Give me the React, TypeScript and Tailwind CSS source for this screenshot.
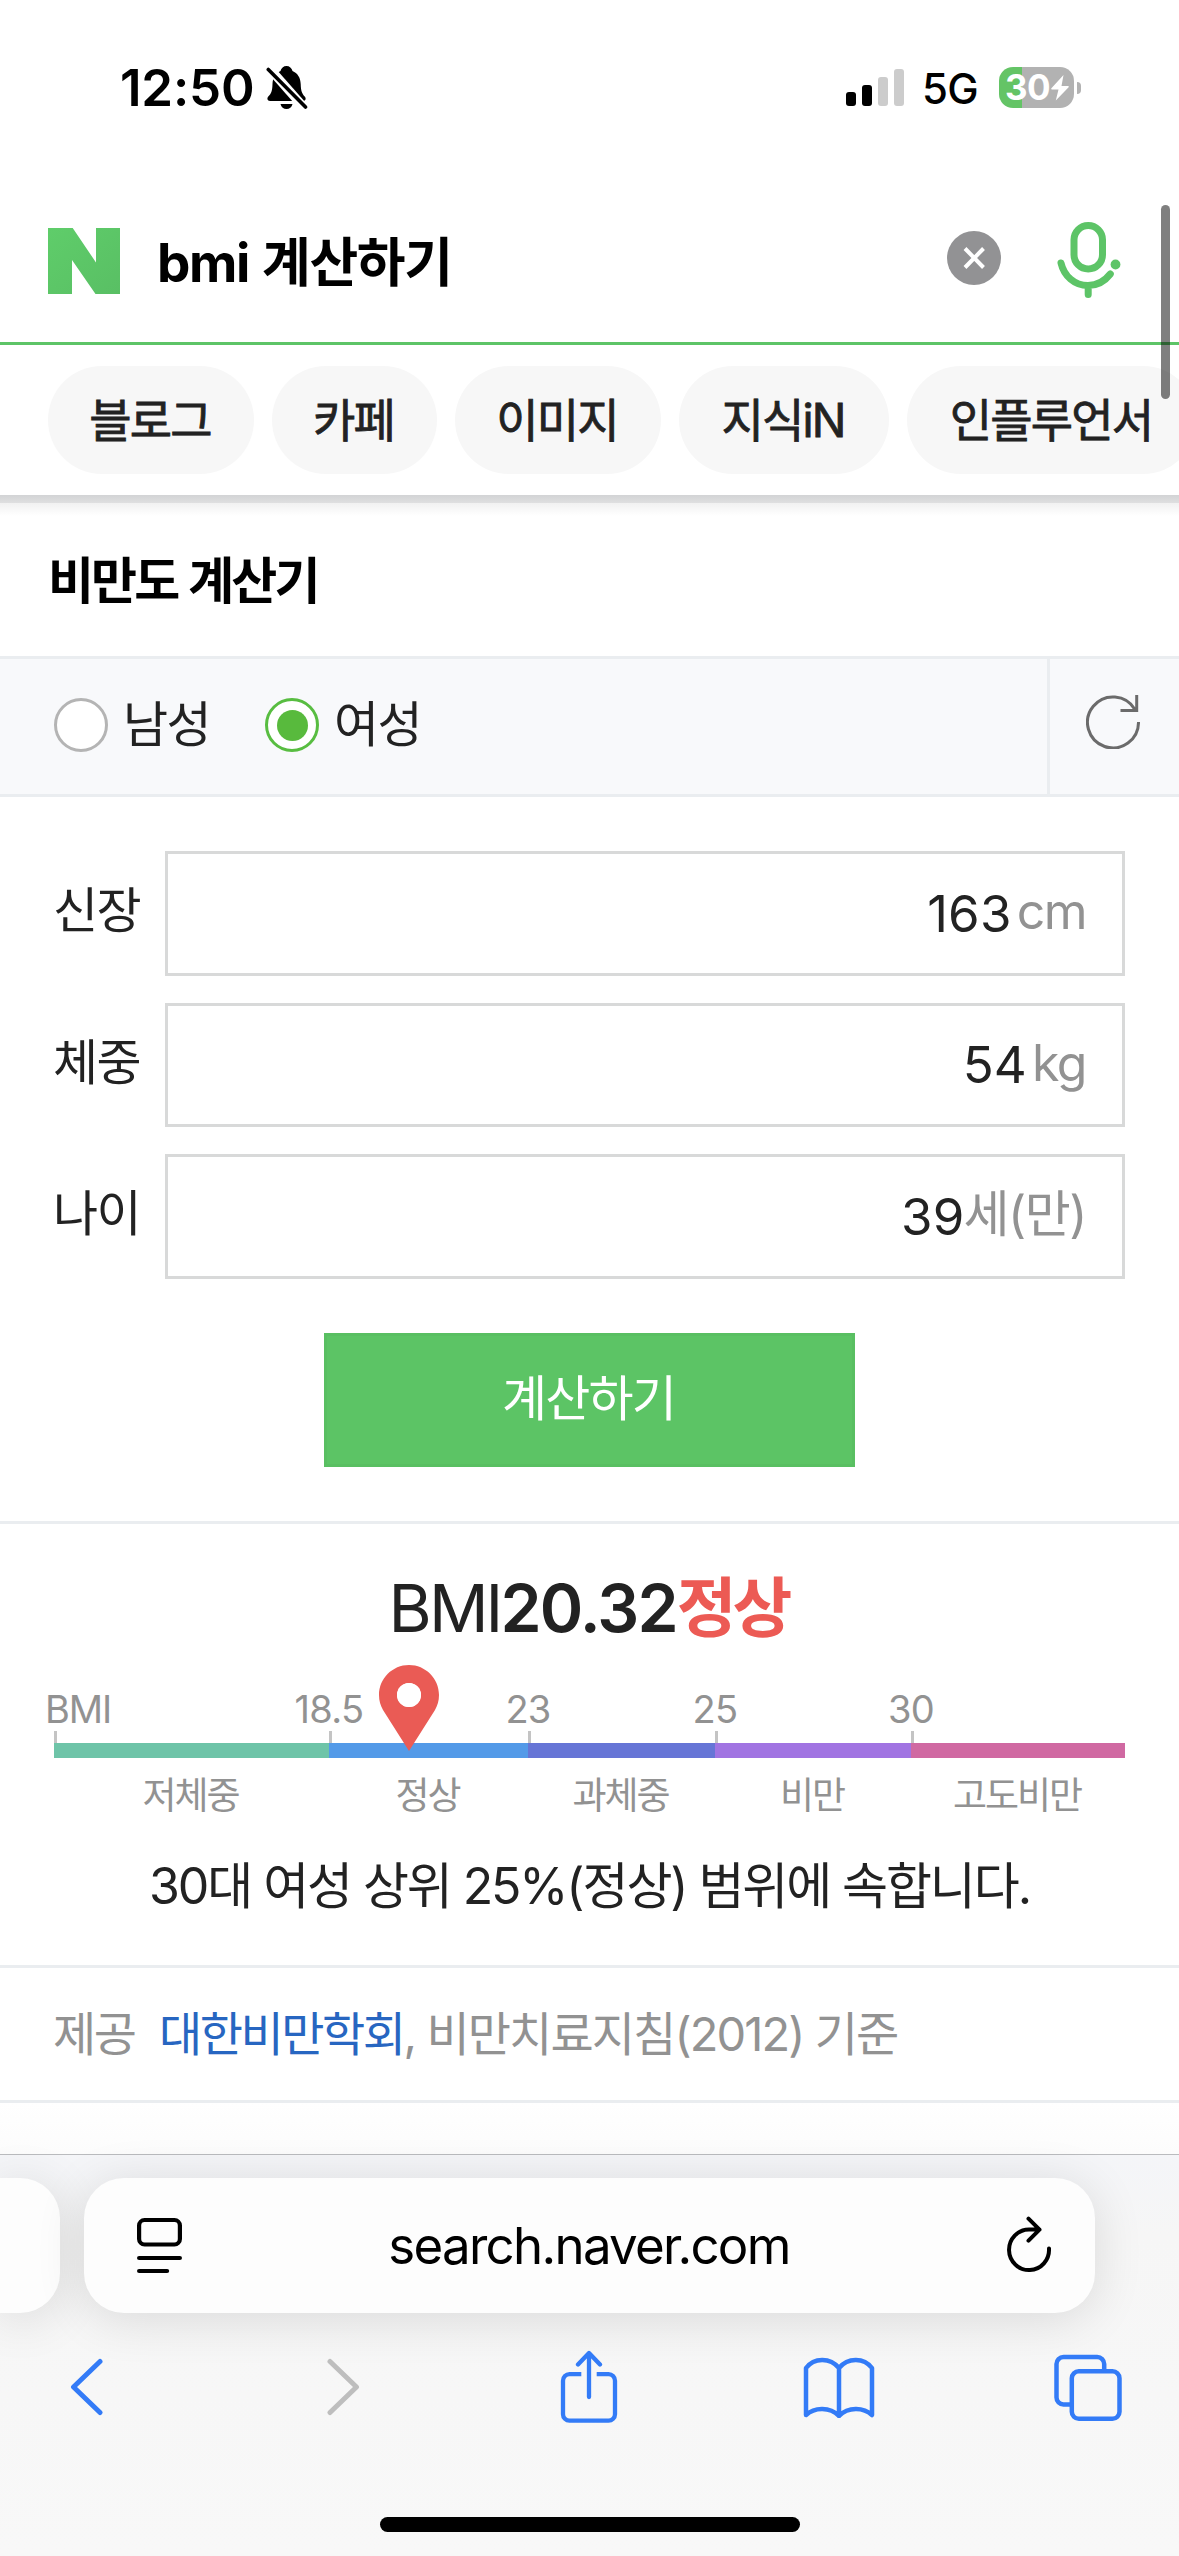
import React from "react";

const BLUE = "#337bf7";
const GREEN = "#5dc467";

function BellOff() {
  return (
    <svg width="42" height="46" viewBox="0 0 42 46" className="ml-[11px]">
      <path
        d="M20.5 1c3 0 5.3 2 6 5 5 2.200 8 6.500 8.200 13 .2 7 1.300 9.500 4 12.500 1.800 2 1 4.500-1.700 4.500H4C1.300 36 .6 33.300 2.500 31.300 5.200 28.500 6.300 26 6.500 19c.2-6.500 3.200-10.800 8-13 .7-3 3-5 6-5z"
        fill="#000"
      />
      <path d="M14.500 39h12c-.8 3.200-3 5-6 5s-5.200-1.800-6-5z" fill="#000" />
      <path d="M.5 0 41 46" stroke="#fff" strokeWidth="9" />
      <path d="M2.300 4.500 39.500 42" stroke="#000" strokeWidth="3.600" strokeLinecap="round" />
    </svg>
  );
}

function StatusBar() {
  return (
    <div className="flex h-[175px] shrink-0 items-center pl-[120px] pr-[98px]">
      <span className="w-[135px] whitespace-nowrap text-[51px] font-semibold leading-[60px] tracking-[-0.2px]">12:50</span>
      <BellOff />
      <div className="ml-auto flex items-center">
        <div className="flex h-[37px] items-end gap-[6px]">
          <span className="h-[14px] w-[10px] rounded-[3px] bg-black" />
          <span className="h-[21px] w-[10px] rounded-[3px] bg-black" />
          <span className="h-[29px] w-[10px] rounded-[3px] bg-[#cccccc]" />
          <span className="h-[37px] w-[10px] rounded-[3px] bg-[#cccccc]" />
        </div>
        <span className="ml-[18px] w-[77px] whitespace-nowrap pt-[3px] text-[42px] font-medium leading-[50px] tracking-[-0.6px]">5G</span>
        <div className="flex h-[41px] w-[75px] items-center overflow-hidden rounded-[14px] bg-[linear-gradient(90deg,#64c466_23px,#b2b2b2_23px)] pl-[6px]">
          <span className="w-[46px] text-[35px] font-bold leading-[41px] tracking-[-0.5px] text-white">30</span>
          <svg width="18" height="26" viewBox="0 0 18 26">
            <path d="M12.500 0 .4 13.200c-.5.7-.2 1.300.6 1.300h6.500L4.800 25.500 17.600 12.300c.5-.7.2-1.300-.6-1.300h-6.500z" fill="#fff" />
          </svg>
        </div>
        <span className="ml-[3px] h-[12px] w-[4px] rounded-r-full bg-[#b2b2b2]" />
      </div>
    </div>
  );
}

function SearchBar() {
  return (
    <div className="flex h-[170px] shrink-0 items-center border-b-[3px] border-[#5dc467] pl-[48px] pr-[57px]">
      <svg width="72" height="66" viewBox="0 0 72 66" className="mt-[5px]">
        <defs>
          <linearGradient id="logo" x1="0" y1="0" x2="1" y2="1">
            <stop offset="0" stopColor="#5fcd6a" />
            <stop offset="1" stopColor="#59bf64" />
          </linearGradient>
        </defs>
        <path d="M0 0h24.700L48 34.500V0h24v66H47.500L24 32v34H0z" fill="url(#logo)" />
      </svg>
      <span className="ml-[37px] mt-[8px] whitespace-nowrap text-[53px] font-bold leading-[64px] tracking-[-1.400px] [word-spacing:2px]">bmi 계산하기</span>
      <svg width="54" height="54" viewBox="0 0 54 54" className="mb-[1px] ml-auto">
        <circle cx="27" cy="27" r="27" fill="#929294" />
        <path d="m18 17.500 18.500 19M36.500 17.500 18 36.500" stroke="#fff" strokeWidth="4" />
      </svg>
      <svg width="66" height="78" viewBox="0 0 66 78" className="ml-[55px] mt-[2px]" fill="none" stroke={GREEN} strokeWidth="7" strokeLinecap="round">
        <rect x="18" y="4.500" width="28.500" height="43.500" rx="14.250" />
        <path d="M5 42c3 13 13.500 22.500 27 22.500 9 0 16.500-4 22.300-11.500M32.200 65v8.500" />
        <circle cx="59.500" cy="43.500" r="4.900" fill={GREEN} stroke="none" />
      </svg>
    </div>
  );
}

const tabs = [
  { label: "블로그", width: "w-[206px]" },
  { label: "카페", width: "w-[165px]" },
  { label: "이미지", width: "w-[206px]" },
  { label: "지식iN", width: "w-[210px]" },
  { label: "인플루언서", width: "w-[290px]" },
];

function Tabs() {
  return (
    <div className="flex h-[150px] shrink-0 items-center gap-[18px] overflow-hidden pl-[48px]">
      {tabs.map((t) => (
        <div key={t.label} className={`flex h-[108px] shrink-0 items-center justify-center rounded-full bg-[#f7f7f7] pr-[2px] ${t.width}`}>
          <span className="whitespace-nowrap text-[46px] leading-[60px] tracking-[-1.800px] text-[#222] [-webkit-text-stroke:0.8px_#222]">{t.label}</span>
        </div>
      ))}
    </div>
  );
}

function Radio({ label, checked }: { label: string; checked?: boolean }) {
  return (
    <div className="flex items-center">
      <span className={`flex h-[54px] w-[54px] items-center justify-center rounded-full border-[3px] bg-white ${checked ? "border-[#58bd41]" : "border-[#b4b4b4]"}`}>
        {checked && <span className="h-[31px] w-[31px] rounded-full bg-[#58ba3d]" />}
      </span>
      <span className="ml-[15px] w-[87px] whitespace-nowrap text-[49px] leading-[60px] tracking-[-1.500px]">{label}</span>
    </div>
  );
}

function GenderRow() {
  return (
    <div className="flex h-[141px] shrink-0 border-y-[3px] border-[#eaedf0] bg-[#f8f9fb]">
      <div className="flex flex-1 items-center gap-[55px] pb-[3px] pl-[54px]">
        <Radio label="남성" />
        <Radio label="여성" checked />
      </div>
      <div className="flex w-[132px] items-start border-l-[3px] border-[#eaedf0] pl-[36px] pt-[36px]">
        <svg width="54" height="54" viewBox="0 0 54 54" fill="none" stroke="#6b6b6b" strokeWidth="3">
          <path d="M52.500 27A25.500 25.500 0 1 1 49 14.500M50.700 0v15.500H34.500" />
        </svg>
      </div>
    </div>
  );
}

const fields = [
  { label: "신장", value: "163", unit: "cm", gap: "mr-[5px]", height: "h-[125px]" },
  { label: "체중", value: "54", unit: "kg", gap: "mr-[5px]", height: "h-[124px]" },
  { label: "나이", value: "39", unit: "세(만)", gap: "mr-[-1px]", height: "h-[125px]" },
];

function Form() {
  return (
    <div className="flex h-[727px] shrink-0 flex-col border-b-[3px] border-[#eaedf0] pl-[53px] pr-[54px] pt-[54px]">
      <div className="flex flex-col gap-[27px]">
        {fields.map((f) => (
          <div key={f.label} className={`flex items-stretch ${f.height}`}>
            <span className="flex w-[112px] items-center whitespace-nowrap pb-[5px] text-[49px] leading-[60px] tracking-[-1.700px]">{f.label}</span>
            <div className="flex flex-1 items-center justify-end border-[3px] border-[#d8d9d9] pr-[36px]">
              <span className={`text-[51px] leading-[60px] tracking-[0.2px] ${f.gap}`}>{f.value}</span>
              <span className="whitespace-nowrap pb-[5px] text-[50px] leading-[64px] tracking-[-1.500px] text-[#929292]">{f.unit}</span>
            </div>
          </div>
        ))}
      </div>
      <button className="ml-[1px] mt-[54px] h-[134px] w-[531px] self-center border-[3px] border-[#59bf62] bg-[#5cc465] pb-[3px] pr-[2px] text-[49px] leading-[60px] tracking-[-1.800px] text-white">
        계산하기
      </button>
    </div>
  );
}

const segments = [
  { mark: "", name: "저체중", cls: "w-[275px]", color: "bg-[#6ec4a8]" },
  { mark: "18.5", name: "정상", cls: "w-[199px]", color: "bg-[#539ae8]" },
  { mark: "23", name: "과체중", cls: "w-[187px]", color: "bg-[#6675d6]" },
  { mark: "25", name: "비만", cls: "w-[196px]", color: "bg-[#a174e2]" },
  { mark: "30", name: "고도비만", cls: "w-[214px]", color: "bg-[#d069a2]" },
];

function Result() {
  return (
    <div className="flex h-[444px] shrink-0 flex-col border-b-[3px] border-[#eaedf0]">
      <div className="mt-[44px] flex h-[80px] items-center justify-center whitespace-nowrap pr-[2px] text-[66px] leading-[80px]">
        <span className="tracking-[-2.900px]">BMI</span>
        <span className="font-semibold tracking-[-1.800px]">20.32</span>
        <span className="text-[65px] font-bold tracking-[-4px] text-[#ec5a54]">정상</span>
      </div>
      <div className="relative ml-[54px] mt-[36px] flex">
        {segments.map((s) => (
          <div key={s.name} className={`flex flex-col ${s.cls}`}>
            <div className="flex h-[50px] w-0 justify-center whitespace-nowrap text-[38px] leading-[50px] tracking-[-0.7px] text-[#929292]">
              {s.mark || <span className="ml-[48px] tracking-[-1.200px]">BMI</span>}
            </div>
            <div className="mt-[-3px] h-[12px] w-[3px] bg-[#c4c4c4]" />
            <div className={`h-[15px] ${s.color}`} />
            <div className="mt-[13px] h-[50px] whitespace-nowrap pr-[2px] text-center text-[37px] leading-[50px] tracking-[-2px] text-[#929292]">{s.name}</div>
          </div>
        ))}
        <svg width="60" height="86" viewBox="0 0 60 86" className="absolute left-[325px] top-[-19px]">
          <path
            fillRule="evenodd"
            d="M30 0c16.500 0 30 13.500 30 30 0 6-1.500 10.500-4 15L30 86 4 45C1.500 40.500 0 36 0 30 0 13.500 13.500 0 30 0zm0 18a12 12 0 1 0 0 24 12 12 0 0 0 0-24z"
            fill="#ea5b55"
          />
          <circle cx="30" cy="30" r="12" fill="#fff" />
        </svg>
      </div>
      <p className="mt-[33px] whitespace-nowrap text-center text-[50px] leading-[64px] tracking-[-2.100px]">30대 여성 상위 25%(정상) 범위에 속합니다.</p>
    </div>
  );
}

function Source() {
  return (
    <div className="flex h-[135px] shrink-0 items-center whitespace-nowrap border-b-[3px] border-[#eaedf0] pl-[53px] text-[47px] leading-[64px] tracking-[-1.900px] text-[#929292]">
      <span className="w-[106px] tracking-[-2.500px]">제공</span>
      <span>
        <a className="tracking-[-2.500px] text-[#2766c1]">대한비만학회</a>, 비만치료지침(2012) 기준
      </span>
    </div>
  );
}

function BrowserChrome() {
  return (
    <div className="flex h-[402px] shrink-0 flex-col border-t border-[#babbbe] bg-[linear-gradient(180deg,#f4f5f8_0px,#f6f6f6_80px,#f8f8f8_400px)] text-black">
      <div className="mt-[23px] flex h-[135px]">
        <div className="h-[135px] w-[60px] rounded-r-[40px] bg-[#fdfdfd] shadow-[0_6px_50px_rgba(0,0,0,0.12)]" />
        <div className="ml-[24px] flex h-[135px] w-[1011px] items-center rounded-[40px] bg-[#fdfdfd] pl-[53px] pr-[43px] shadow-[0_6px_50px_rgba(0,0,0,0.12)]">
          <svg width="45" height="57" viewBox="0 0 45 57" fill="none" stroke="#000" strokeWidth="4.200" strokeLinecap="round">
            <rect x="2.100" y="3" width="40.800" height="24.500" rx="5.500" />
            <path d="M2.100 41h40.800M2.100 54h28" />
          </svg>
          <span className="flex-1 whitespace-nowrap pr-[10px] pt-[1px] text-center text-[51px] leading-[64px] tracking-[-1.700px]">search.naver.com</span>
          <svg width="46" height="58" viewBox="0 0 46 58" className="mb-[4px]" fill="none" stroke="#000" strokeWidth="4" strokeLinecap="round" strokeLinejoin="round">
            <path d="M43 33.500A20 20.300 0 1 1 23 14.500h10.500M22.500 3.700 33.500 14.700 22.500 25.700" />
          </svg>
        </div>
      </div>
      <div className="mt-[36px] flex h-[76px] items-center">
        <svg width="34" height="58" viewBox="0 0 34 58" className="ml-[69px]" fill="none" stroke={BLUE} strokeWidth="5" strokeLinecap="round" strokeLinejoin="round">
          <path d="M31 3.500 4.500 29 31 54.500" />
        </svg>
        <svg width="34" height="58" viewBox="0 0 34 58" className="ml-[223px]" fill="none" stroke="#bebebe" strokeWidth="5" strokeLinecap="round" strokeLinejoin="round">
          <path d="M4 3.500 30.500 29 4 54.500" />
        </svg>
        <svg width="58" height="76" viewBox="0 0 58 76" className="ml-[200px] mt-[1px]" fill="none" stroke={BLUE} strokeWidth="4.300" strokeLinecap="round" strokeLinejoin="round">
          <path d="M21.300 24.200H9.500a6.500 6.500 0 0 0-6.500 6.500v33.500a6.500 6.500 0 0 0 6.500 6.500h39a6.500 6.500 0 0 0 6.500-6.500V30.700a6.500 6.500 0 0 0-6.500-6.500H36.700" strokeLinecap="butt" />
          <path d="M29 47V3.500M18 14.500 29 3l11 11.500" />
        </svg>
        <svg width="72" height="62" viewBox="0 0 72 62" className="ml-[185px]" fill="none" stroke={BLUE} strokeWidth="4.500" strokeLinecap="round" strokeLinejoin="round">
          <path d="M36 12C27 1 11 1.500 3 12v47c8-7.500 23.500-9 33 1 9.500-10 25-8.500 33-1V12C61 1.500 45 1 36 12zM36 12v48" />
        </svg>
        <svg width="68" height="68" viewBox="0 0 68 68" className="ml-[179px] mt-[2px]" fill="none" stroke={BLUE} strokeWidth="4.500">
          <rect x="17.800" y="17.300" width="47.700" height="47.500" rx="7" />
          <path d="M50.200 17V10a7 7 0 0 0-7-7H9.500a7 7 0 0 0-7 7v33.500a7 7 0 0 0 7 7H17" />
        </svg>
      </div>
      <div className="mx-auto mt-[92px] h-[15px] w-[420px] rounded-full bg-black" />
    </div>
  );
}

export default function App() {
  return (
    <main className="relative flex h-[2556px] w-[1179px] flex-col overflow-hidden bg-white font-['Inter','Noto_Sans_CJK_KR',sans-serif] text-[#222]">
      <header className="flex shrink-0 flex-col text-black">
        <StatusBar />
        <SearchBar />
        <Tabs />
      </header>
      <div className="h-[8px] shrink-0 bg-[linear-gradient(180deg,#d2d3d5,#dfdfe0)]" />
      <div className="h-[13px] shrink-0 bg-[linear-gradient(180deg,#f1f1f1,#ffffff)]" />
      <h1 className="h-[140px] shrink-0 whitespace-nowrap pl-[48px] pt-[33px] text-[50px] font-bold leading-[64px] tracking-[-2.900px] text-black [word-spacing:2px]">비만도 계산기</h1>
      <GenderRow />
      <Form />
      <Result />
      <Source />
      <div className="h-[51px] shrink-0 bg-[linear-gradient(180deg,#ffffff,#fcfcfc)]" />
      <BrowserChrome />
      <div className="absolute left-[1161px] top-[205px] h-[194px] w-[9px] rounded-full bg-black/50" />
    </main>
  );
}
